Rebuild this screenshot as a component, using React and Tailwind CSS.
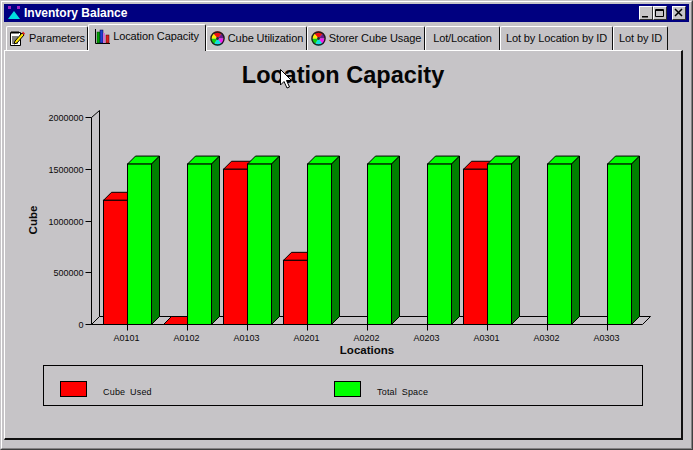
const tabs = [
  { label: "Parameters", icon: "notes", width: "w-[82px]" },
  { label: "Location Capacity", icon: "bars", width: "w-[118px]", active: true },
  { label: "Cube Utilization", icon: "pie", width: "w-[101px]" },
  { label: "Storer Cube Usage", icon: "pie", width: "w-[118px]" },
  { label: "Lot/Location", width: "w-[75px]" },
  { label: "Lot by Location by ID", width: "w-[113px]" },
  { label: "Lot by ID", width: "w-[55px]" },
];

const locations = [
  { name: "A0101", used: 1200000 },
  { name: "A0102", used: 0 },
  { name: "A0103", used: 1500000 },
  { name: "A0201", used: 620000 },
  { name: "A0202", used: null },
  { name: "A0203", used: null },
  { name: "A0301", used: 1500000 },
  { name: "A0302", used: null },
  { name: "A0303", used: null },
];

const toY = (value) => 324 - (value * 207) / 2000000;

const NotesIcon = () => (
  <svg width="17" height="17" viewBox="0 0 17 17" className="shrink-0">
    <path d="M1.5 2.5h10v13h-10z" fill="#fff" stroke="#000" />
    <path d="M3 1v3M5 1v3M7 1v3M9 1v3M3 7h6M3 9h5M3 11h4M3 13h6" stroke="#000" />
    <path d="M6 11l7-8 2 2-7 8-3 1z" fill="#ffe600" stroke="#000" />
    <path d="M13 3l1-1.5 2 2-1 1.5z" fill="#e02020" />
  </svg>
);

const BarsIcon = () => (
  <svg width="15" height="15" viewBox="0 0 15 15" className="shrink-0">
    <path d="M0.5 0v14.5h14.5" fill="none" stroke="#000" />
    <rect x="2" y="3" width="3" height="11" fill="#00a000" stroke="#004000" strokeWidth="0.5" />
    <rect x="5" y="1" width="3" height="13" fill="#2040d0" stroke="#000040" strokeWidth="0.5" />
    <rect x="8" y="4" width="2" height="10" fill="#d070d0" />
    <rect x="11" y="6" width="3" height="8" fill="#e02020" stroke="#400000" strokeWidth="0.5" />
  </svg>
);

const PieIcon = () => (
  <svg width="15" height="15" viewBox="0 0 16 16" className="shrink-0">
    <path d="M8 8L3 2.2A7.5 7.5 0 0 1 13 2.2z" fill="#f01010" />
    <path d="M8 8L13 2.2A7.5 7.5 0 0 1 15.5 8z" fill="#6a1a8a" />
    <path d="M8 8L15.5 8A7.5 7.5 0 0 1 12.5 14z" fill="#f020f0" />
    <path d="M8 8L12.5 14A7.5 7.5 0 0 1 4 14.3z" fill="#10e0e0" />
    <path d="M8 8L4 14.3A7.5 7.5 0 0 1 0.5 8z" fill="#10d010" />
    <path d="M8 8L0.5 8A7.5 7.5 0 0 1 3 2.2z" fill="#fff000" />
    <circle cx="8" cy="8" r="7" fill="none" stroke="#202020" strokeWidth="1.5" />
    <circle cx="8" cy="8" r="1.5" fill="#303030" />
  </svg>
);

const tabIcons = { notes: <NotesIcon />, bars: <BarsIcon />, pie: <PieIcon /> };

const Tab = ({ tab }) => (
  <div
    className={`flex items-center justify-center gap-[3px] rounded-t-[2px] border-t border-l border-r border-t-white border-l-white border-r-[#101010] bg-[#c6c4c7] ${tab.width} ${
      tab.active ? "relative z-10 -mb-px h-[27px] pb-[4px]" : "h-[24px]"
    }`}
  >
    {tab.icon && tabIcons[tab.icon]}
    <span className="whitespace-nowrap text-[11px] tracking-[-0.1px] text-[#0a0a0a]">{tab.label}</span>
  </div>
);

const WindowButton = ({ children, className }) => (
  <div
    className={`flex h-[14px] w-[14px] items-center justify-center border border-t-white border-l-white border-r-[#303030] border-b-[#303030] bg-[#c6c4c7] ${className}`}
  >
    <svg width="10" height="10" viewBox="0 0 10 10">
      {children}
    </svg>
  </div>
);

const Bar = ({ x, value, front, top, side }) => {
  const y = toY(value);
  const h = 324 - y;
  return (
    <g stroke="#000">
      <polygon points={`${x},${y} ${x + 8},${y - 8} ${x + 32},${y - 8} ${x + 24},${y}`} fill={top} />
      <polygon points={`${x + 24},${y} ${x + 32},${y - 8} ${x + 32},${316} ${x + 24},324`} fill={side} />
      <rect x={x} y={y} width="24" height={h} fill={front} />
    </g>
  );
};

const Chart = () => (
  <svg viewBox="5 100 677 260" width="677" height="260" className="mt-[11px] block">
    <g transform="translate(0.5 0.5)">
      {/* back wall and floor */}
      <path
        d="M91 117L99 110V316H650M91 117V324H642L650 316M91 324L99 316"
        fill="none"
        stroke="#000"
      />
      {[2000000, 1500000, 1000000, 500000, 0].map((v) => (
        <g key={v}>
          <path d={`M85 ${Math.round(toY(v))}H91`} stroke="#000" />
          <text x="83" y={Math.round(toY(v)) + 3} textAnchor="end" className="fill-[#0a0a0a] text-[9px]">
            {v}
          </text>
        </g>
      ))}
      {locations.map((loc, i) => {
        const x = 127 + i * 60;
        return (
          <g key={loc.name}>
            {loc.used !== null && (
              <Bar x={x - 24} value={loc.used} front="#ff0000" top="#ff0000" side="#ff0000" />
            )}
            <Bar x={x} value={1550000} front="#00ff00" top="#00ff00" side="#008000" />
            <path d={`M${x} 324V330`} stroke="#000" />
            <text x={x - 1} y="340" textAnchor="middle" className="fill-[#0a0a0a] text-[9px]">
              {loc.name}
            </text>
          </g>
        );
      })}
    </g>
    <text x="367" y="354" textAnchor="middle" className="fill-[#0a0a0a] text-[11.5px] font-bold">
      Locations
    </text>
    <text
      x="37"
      y="220"
      textAnchor="middle"
      transform="rotate(-90 37 220)"
      className="fill-[#0a0a0a] text-[11.5px] font-bold"
    >
      Cube
    </text>
  </svg>
);

const LegendItem = ({ color, label, width }) => (
  <div className={`flex items-start ${width}`}>
    <div className={`h-[16px] w-[27px] border border-black ${color}`} />
    <span className="mt-[5px] ml-[16px] text-[9px] leading-[12px] tracking-[0.2px] [word-spacing:2px] text-[#0a0a0a]">
      {label}
    </span>
  </div>
);

export default function App() {
  return (
    <div className="relative h-[450px] w-[693px] overflow-hidden border border-t-[#c6c4c7] border-l-[#c6c4c7] border-r-[#404040] border-b-[#404040] bg-[#c6c4c7] font-['Liberation_Sans',Arial,sans-serif]">
      <div className="flex h-full flex-col border border-t-white border-l-white border-r-[#848284] border-b-[#848284] p-[2px]">
        <div className="flex h-[18px] shrink-0 items-center bg-[#000080] pl-[3px] pr-[3px]">
          <svg width="14" height="14" viewBox="0 0 14 14">
            <rect x="1" y="0" width="3" height="3" fill="#a020c0" />
            <rect x="10" y="0" width="3" height="3" fill="#a020c0" />
            <polygon points="7,5 13,13 1,13" fill="#00e0e0" />
          </svg>
          <span className="ml-[3px] text-[12px] font-bold text-white">Inventory Balance</span>
          <div className="ml-auto flex items-center">
            <WindowButton>
              <path d="M1 8h6v1.5H1z" fill="#000" />
            </WindowButton>
            <WindowButton className="mr-[5px]">
              <path d="M0.5 1.5h8v7h-8zM0.5 2.5h8" fill="none" stroke="#000" />
            </WindowButton>
            <WindowButton>
              <path d="M1 1l7 7M8 1l-7 7" stroke="#000" strokeWidth="1.5" />
            </WindowButton>
          </div>
        </div>
        <div className="flex h-[28px] shrink-0 items-end pl-[2px]">
          {tabs.map((tab) => (
            <Tab key={tab.label} tab={tab} />
          ))}
        </div>
        <div className="mr-[6px] h-[390px] shrink-0 border-t border-l border-r-2 border-b-2 border-t-white border-l-white border-r-[#101010] border-b-[#101010]">
          <h1 className="pt-[10px] text-center text-[23.5px] leading-[28px] font-bold text-[#050505]">
            Location Capacity
          </h1>
          <Chart />
          <div className="mt-[5px] ml-[38px] flex h-[41px] w-[600px] items-start border border-black pt-[15px] pl-[16px]">
            <LegendItem color="bg-[#ff0000]" label="Cube Used" width="w-[274px]" />
            <LegendItem color="bg-[#00ff00]" label="Total Space" width="w-[200px]" />
          </div>
        </div>
      </div>
      {/* mouse pointer left over the title */}
      <svg width="14" height="22" viewBox="0 0 14 22" className="absolute top-[67px] left-[278px] z-20">
        <path d="M1.5 1.5V17L5 13.5L8 20L10.5 19L7.5 12.5H12.5z" fill="#fff" stroke="#000" />
      </svg>
    </div>
  );
}
